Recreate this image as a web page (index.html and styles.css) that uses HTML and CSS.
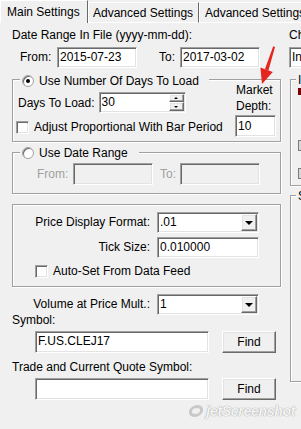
FILE: index.html
```html
<!DOCTYPE html>
<html>

<head>
    <meta charset="utf-8">
    <title>Main Settings</title>
    <link rel="stylesheet" href="styles.css">
</head>

<body>
    <div class="tabs">
        <div class="tab active">Main Settings</div>
        <div class="tab second">Advanced Settings</div>
        <div class="tab third">Advanced Settings</div>
    </div>
    <div class="page">
        <div class="main">
            <div class="caption">Date Range In File (yyyy-mm-dd):</div>
            <div class="date-row">
                <span class="lbl">From:</span>
                <span class="field">2015-07-23</span>
                <span class="lbl right">To:</span>
                <span class="field">2017-03-02</span>
            </div>

            <div class="group days">
                <div class="days-left">
                    <div class="gtitle first"><span class="radio on"></span>Use Number Of Days To Load</div>
                    <div class="days-row">
                        <span>Days To Load:</span>
                        <span class="field spin">
                            <span class="spin-val">30</span>
                            <span class="spin-btns">
                                <span class="sbtn raised up"></span>
                                <span class="sbtn raised down"></span>
                            </span>
                        </span>
                    </div>
                    <div class="check-row"><span class="check"></span>Adjust Proportional With Bar Period</div>
                </div>
                <div class="depth">
                    <div class="depth-lbl">Market<br>Depth:</div>
                    <span class="field depth-in">10</span>
                </div>
            </div>

            <div class="group range">
                <div class="gtitle wide"><span class="radio"></span>Use Date Range</div>
                <div class="range-row">
                    <span class="lbl off">From:</span>
                    <span class="field off"></span>
                    <span class="lbl off right">To:</span>
                    <span class="field off"></span>
                </div>
            </div>

            <div class="group fmt">
                <div class="form-grid">
                    <span class="lbl right">Price Display Format:</span>
                    <span class="field combo"><span class="val">.01</span><span class="drop raised"></span></span>
                    <span class="lbl right">Tick Size:</span>
                    <span class="field">0.010000</span>
                </div>
                <div class="check-row auto"><span class="check"></span>Auto-Set From Data Feed</div>
            </div>

            <div class="form-grid vol">
                <span class="lbl right">Volume at Price Mult.:</span>
                <span class="field combo"><span class="val">1</span><span class="drop raised"></span></span>
            </div>

            <div class="caption sym">Symbol:</div>
            <div class="sym-row">
                <span class="field">F.US.CLEJ17</span>
                <span class="btn raised">Find</span>
            </div>

            <div class="caption trade">Trade and Current Quote Symbol:</div>
            <div class="sym-row second">
                <span class="field"></span>
                <span class="btn raised">Find</span>
            </div>
        </div>

        <div class="side">
            <div class="caption">Chart Data Type:</div>
            <span class="field side-in">Intraday</span>
            <div class="sgroup s1">
                <div class="gtitle side-title">Interval</div>
                <span class="mark"></span>
                <span class="stub b"></span>
                <span class="stub c"></span>
            </div>
            <div class="sgroup s2">
                <div class="gtitle side-title">Session</div>
            </div>
        </div>
    </div>

    <svg class="arrow" width="301" height="429" viewBox="0 0 301 429">
        <polygon points="273.2,46.3 275.0,47.0 268.4,70.5 264.9,69.3" fill="#e4261f" />
        <polygon points="262,84 260.4,67.4 272.8,71.9" fill="#e4261f" />
    </svg>
    <div class="watermark"><span class="wm-logo"></span>jetScreenshot</div>
</body>

</html>
```

FILE: styles.css
```css
* {
    margin: 0;
    padding: 0;
    box-sizing: border-box;
}

body {
    width: 301px;
    height: 429px;
    overflow: hidden;
    position: relative;
    background: #f0f0f0;
    color: #000;
    font: 12px/14px "Liberation Sans", Arial, sans-serif;
}

/* tab strip */
.tabs {
    display: flex;
    align-items: flex-end;
    height: 23px;
}

.tab {
    flex: none;
    height: 21px;
    line-height: 20px;
    padding-left: 4px;
    border: 1px solid;
    border-color: #fff #696969 #fff #fff;
    white-space: nowrap;
}

.tab.active {
    width: 88px;
    height: 23px;
    line-height: 23px;
    padding-left: 6px;
    border-bottom: none;
}

.tab.second {
    width: 111px;
}

.tab.third {
    width: 120px;
    padding-left: 5px;
}

/* columns */
.page {
    display: flex;
}

.main {
    flex: none;
    width: 283px;
}

.side {
    flex: none;
    width: 120px;
    padding-left: 6px;
}

.caption {
    margin-top: 5px;
    padding-left: 12px;
    white-space: nowrap;
}

.side .caption {
    padding-left: 0;
}

.lbl {
    line-height: 21px;
    white-space: nowrap;
}

.lbl.right {
    text-align: right;
    padding-right: 4px;
}

.lbl.off {
    color: #a0a0a0;
}

/* sunken edit box */
.field {
    display: block;
    height: 21px;
    line-height: 19px;
    padding-left: 2px;
    background: #fff;
    border: 1px solid;
    border-color: #a0a0a0 #fff #fff #a0a0a0;
    box-shadow: inset 1px 1px #696969, inset -1px -1px #e3e3e3;
    white-space: nowrap;
    overflow: hidden;
}

.field.off {
    background: #f0f0f0;
}

.raised {
    background: #f0f0f0;
    border: 1px solid;
    border-color: #fff #696969 #696969 #fff;
    box-shadow: inset -1px -1px #a0a0a0, inset 1px 1px #e3e3e3;
}

.date-row {
    display: grid;
    grid-template-columns: 37px 80px 43px 80px;
    margin-top: 5px;
    padding-left: 20px;
}

.date-row .lbl.right {
    padding-right: 5px;
}

/* group boxes */
.group {
    margin-left: 12px;
    width: 269px;
    border: 1px solid #a0a0a0;
    box-shadow: inset 1px 1px #fff, 1px 1px #fff;
}

.gtitle {
    display: flex;
    align-items: center;
    width: max-content;
    height: 16px;
    margin: -8px 0 0 7px;
    padding: 0 11px 0 2px;
    background: #f0f0f0;
    white-space: nowrap;
}

.gtitle.first {
    margin-top: -7px;
    padding-right: 10px;
}

.radio {
    display: flex;
    align-items: center;
    justify-content: center;
    width: 12px;
    height: 12px;
    margin-right: 5px;
    border-radius: 50%;
    background: #fff;
    border: 1px solid #a0a0a0;
    box-shadow: inset 1px 1px #696969;
}

.radio.on::after {
    content: "";
    width: 4px;
    height: 4px;
    border-radius: 50%;
    background: #000;
}

.check {
    flex: none;
    width: 13px;
    height: 13px;
    margin-right: 5px;
    background: #fff;
    border: 1px solid;
    border-color: #a0a0a0 #fff #fff #a0a0a0;
    box-shadow: inset 1px 1px #696969, inset -1px -1px #e3e3e3;
}

.check-row {
    display: flex;
    align-items: center;
    height: 16px;
    white-space: nowrap;
}

.days {
    display: grid;
    grid-template-columns: 1fr 50px;
    margin-top: 11px;
}

.days-left {
    padding-bottom: 6px;
}

.days-row {
    display: flex;
    align-items: center;
    margin-top: 3px;
    padding-left: 5px;
    white-space: nowrap;
}

.spin {
    display: flex;
    width: 87px;
    margin-left: 4px;
}

.spin-val {
    flex: 1;
}

.spin-btns {
    display: flex;
    flex-direction: column;
    width: 15px;
    margin: 1px 1px 0 0;
}

.sbtn {
    display: flex;
    align-items: center;
    justify-content: center;
    height: 8px;
}

.sbtn.down {
    height: 9px;
}

.sbtn::after {
    content: "";
    border-left: 2px solid transparent;
    border-right: 2px solid transparent;
}

.sbtn.up::after {
    border-bottom: 2px solid #000;
}

.sbtn.down::after {
    border-top: 2px solid #000;
}

.days .check-row {
    margin-top: 6px;
    padding-left: 3px;
}

.depth-lbl {
    margin-top: 2px;
    padding-left: 6px;
    line-height: 16px;
}

.depth-in {
    width: 41px;
    height: 22px;
    line-height: 20px;
    margin: 1px 0 0 5px;
}

.range {
    margin-top: 10px;
}

.range-row {
    display: grid;
    grid-template-columns: 36px 80px 27px 80px;
    height: 22px;
    margin-top: 2px;
    padding: 0 0 8px 24px;
    box-sizing: content-box;
}

.range-row .field {
    height: 22px;
}

.range-row .lbl {
    line-height: 22px;
}

.fmt {
    margin-top: 10px;
    padding: 7px 0 7px;
}

.form-grid {
    display: grid;
    grid-template-columns: 141px 102px;
    column-gap: 3px;
    row-gap: 4px;
}

.combo {
    display: flex;
}

.combo .val {
    flex: 1;
}

.drop {
    display: flex;
    align-items: center;
    justify-content: center;
    width: 16px;
    height: 17px;
    margin: 1px 1px 0 0;
}

.drop::after {
    content: "";
    border-left: 4px solid transparent;
    border-right: 4px solid transparent;
    border-top: 4px solid #000;
}

.fmt .check-row {
    margin-top: 5px;
    padding-left: 22px;
}

.vol {
    margin: 7px 0 0 13px;
}

.caption.sym {
    margin-top: -1px;
    line-height: 12px;
}

.sym-row {
    display: grid;
    grid-template-columns: 174px 54px;
    column-gap: 13px;
    margin-top: 5px;
    padding-left: 35px;
}

.sym-row .field,
.btn {
    height: 22px;
}

.sym-row.second {
    margin-top: 4px;
}

.caption.trade {
    margin-top: 7px;
}

.btn {
    display: block;
    line-height: 20px;
    text-align: center;
}

/* right column, mostly cut off */
.side-in {
    width: 80px;
    margin-top: 5px;
}

.sgroup {
    display: flex;
    flex-direction: column;
    margin-left: 1px;
    width: 100px;
    border: 1px solid #a0a0a0;
    box-shadow: inset 1px 1px #fff, 1px 1px #fff;
}

.side-title {
    margin-left: 5px;
}

.s1 {
    height: 107px;
    margin-top: 11px;
}

.s2 {
    height: 187px;
    margin-top: 9px;
}

.mark {
    width: 5px;
    height: 7px;
    margin: 0 0 0 7px;
    background: #7a0000;
}

.stub {
    width: 40px;
    height: 11px;
    margin-left: 7px;
    background: #d8d8d8;
    border: 1px solid #7a7a7a;
}

.stub.b {
    margin-top: 45px;
}

.stub.c {
    margin-top: 17px;
}

/* overlays */
.arrow {
    position: absolute;
    left: 0;
    top: 0;
    pointer-events: none;
}

.watermark {
    position: absolute;
    right: 6px;
    top: 403px;
    display: flex;
    align-items: center;
    font: italic bold 14px/16px "Liberation Sans", Arial, sans-serif;
    color: #f4f4f4;
    text-shadow: 0 0 1px #a8a8a8, 0 0 1px #a8a8a8;
    letter-spacing: -0.3px;
}

.wm-logo {
    width: 14px;
    height: 12px;
    margin-right: 3px;
    border: 3px solid #c8c8c8;
    border-radius: 50%;
    transform: skewX(-15deg);
}
```
